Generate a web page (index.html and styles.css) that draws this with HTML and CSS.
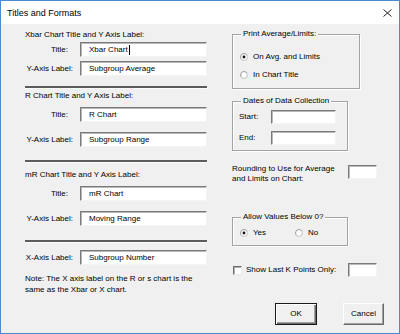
FILE: index.html
```html
<!DOCTYPE html>
<html lang="en">
<head>
    <meta charset="UTF-8">
    <title>Titles and Formats</title>
    <link rel="stylesheet" href="styles.css">
</head>
<body>
<div class="dialog">
    <div class="titlebar">
        <span class="title">Titles and Formats</span>
        <svg class="close" viewBox="0 0 9 8" width="9" height="8">
            <path d="M0.5 0.5 L8.5 7.5 M8.5 0.5 L0.5 7.5" stroke="#222" stroke-width="1" fill="none"/>
        </svg>
    </div>

    <div class="content">
        <div class="col-left">
            <div class="group group-xbar">
                <div class="heading">Xbar Chart Title and Y Axis Label:</div>
                <div class="field field-first">
                    <label class="lbl lbl-title">Title:</label>
                    <div class="textbox">Xbar Chart<span class="caret"></span></div>
                </div>
                <div class="field field-second">
                    <label class="lbl">Y-Axis Label:</label>
                    <div class="textbox">Subgroup Average</div>
                </div>
            </div>

            <div class="sep sep-1"></div>

            <div class="group group-r">
                <div class="heading">R Chart Title and Y Axis Label:</div>
                <div class="field field-first">
                    <label class="lbl lbl-title">Title:</label>
                    <div class="textbox">R Chart</div>
                </div>
                <div class="field field-second">
                    <label class="lbl">Y-Axis Label:</label>
                    <div class="textbox">Subgroup Range</div>
                </div>
            </div>

            <div class="sep sep-2"></div>

            <div class="group group-mr">
                <div class="heading">mR Chart Title and Y Axis Label:</div>
                <div class="field field-first">
                    <label class="lbl lbl-title">Title:</label>
                    <div class="textbox">mR Chart</div>
                </div>
                <div class="field field-second">
                    <label class="lbl">Y-Axis Label:</label>
                    <div class="textbox">Moving Range</div>
                </div>
            </div>

            <div class="sep sep-3"></div>

            <div class="field field-x">
                <label class="lbl">X-Axis Label:</label>
                <div class="textbox">Subgroup Number</div>
            </div>

            <p class="note">Note: The X axis label on the R or s chart is the<br>same as the Xbar or X chart.</p>
        </div>

        <div class="col-right">
            <fieldset class="frame frame-print">
                <legend>Print Average/Limits:</legend>
                <div class="radio radio-first">
                    <svg class="radio-dot" viewBox="0 0 8 8" width="8" height="8">
                        <circle cx="4" cy="4" r="3.5" fill="#fff" stroke="#9a9a9a"/>
                        <path d="M1.2 6.2 A3.5 3.5 0 0 0 6.8 1.8" stroke="#e4e4e4" fill="none"/>
                        <circle cx="4" cy="4" r="1.4" fill="#111"/>
                    </svg>
                    <span>On Avg. and Limits</span>
                </div>
                <div class="radio radio-second">
                    <svg class="radio-dot" viewBox="0 0 8 8" width="8" height="8">
                        <circle cx="4" cy="4" r="3.5" fill="#fff" stroke="#9a9a9a"/>
                        <path d="M1.2 6.2 A3.5 3.5 0 0 0 6.8 1.8" stroke="#e4e4e4" fill="none"/>
                    </svg>
                    <span>In Chart Title</span>
                </div>
            </fieldset>

            <fieldset class="frame frame-dates">
                <legend>Dates of Data Collection</legend>
                <div class="date-row date-start">
                    <span class="date-lbl">Start:</span>
                    <div class="textbox textbox-date"></div>
                </div>
                <div class="date-row date-end">
                    <span class="date-lbl">End:</span>
                    <div class="textbox textbox-date"></div>
                </div>
            </fieldset>

            <div class="rounding">
                <span>Rounding to Use for Average<br>and Limits on Chart:</span>
                <div class="textbox textbox-small"></div>
            </div>

            <fieldset class="frame frame-below">
                <legend>Allow Values Below 0?</legend>
                <div class="radio-pair">
                    <div class="radio">
                        <svg class="radio-dot" viewBox="0 0 8 8" width="8" height="8">
                            <circle cx="4" cy="4" r="3.5" fill="#fff" stroke="#9a9a9a"/>
                            <path d="M1.2 6.2 A3.5 3.5 0 0 0 6.8 1.8" stroke="#e4e4e4" fill="none"/>
                            <circle cx="4" cy="4" r="1.4" fill="#111"/>
                        </svg>
                        <span>Yes</span>
                    </div>
                    <div class="radio">
                        <svg class="radio-dot" viewBox="0 0 8 8" width="8" height="8">
                            <circle cx="4" cy="4" r="3.5" fill="#fff" stroke="#9a9a9a"/>
                            <path d="M1.2 6.2 A3.5 3.5 0 0 0 6.8 1.8" stroke="#e4e4e4" fill="none"/>
                        </svg>
                        <span>No</span>
                    </div>
                </div>
            </fieldset>

            <div class="check-row">
                <span class="checkbox"></span>
                <span class="check-text">Show Last K Points Only:</span>
                <div class="textbox textbox-small"></div>
            </div>

            <div class="buttons">
                <button class="btn btn-default">OK</button>
                <button class="btn">Cancel</button>
            </div>
        </div>
    </div>
</div>
</body>
</html>
```

FILE: styles.css
```css
* {
    box-sizing: border-box;
}
body {
    margin: 0;
    font-family: "Liberation Sans", Arial, sans-serif;
    font-size: 8px;
    line-height: 10px;
    color: #000;
}
.dialog {
    width: 400px;
    height: 334px;
    border: 1px solid #4b8bd1;
    background: #f0f0f0;
    display: flex;
    flex-direction: column;
}
.titlebar {
    height: 23px;
    flex: none;
    background: #fff;
    display: flex;
    align-items: center;
    justify-content: space-between;
    padding: 0 7px 0 6px;
}
.title {
    font-size: 9px;
    line-height: 12px;
}
.close {
    display: block;
}
.content {
    display: flex;
    gap: 25px;
    padding-left: 24px;
}

/* left column */
.col-left {
    width: 182px;
    display: flex;
    flex-direction: column;
}
.heading {
    white-space: nowrap;
}
.group-xbar { margin-top: 6px; }
.group-r { margin-top: 2px; }
.group-mr { margin-top: 7px; }
.field {
    display: flex;
    align-items: center;
    height: 15px;
}
.field-first { margin-top: 6px; }
.field-second { margin-top: 10px; }
.group-xbar .field-first { margin-top: 2px; }
.group-xbar .field-second { margin-top: 4px; }
.lbl {
    width: 55px;
    flex: none;
    text-align: right;
    padding-right: 7px;
    white-space: nowrap;
}
.lbl-title {
    padding-right: 12px;
}
.textbox {
    flex: 1;
    height: 100%;
    display: flex;
    align-items: center;
    padding-left: 8px;
    background: #fff;
    border: 1px solid;
    border-color: #7a7a7a #f4f4f4 #f4f4f4 #7a7a7a;
    box-shadow: inset 1px 1px #b9b9b9;
    white-space: nowrap;
}
.caret {
    width: 1px;
    height: 10px;
    background: #000;
    margin-left: 1px;
}
.sep {
    height: 3px;
    border-top: 2px solid #5b5b5b;
    border-bottom: 1px solid #fbfbfb;
}
.sep-1 { margin-top: 10px; }
.sep-2 { margin-top: 13px; }
.sep-3 { margin-top: 14px; }
.field-x { margin-top: 7px; }
.note {
    margin: 8px 0 0;
    line-height: 11px;
    white-space: nowrap;
}

/* right column */
.col-right {
    width: 152px;
    display: flex;
    flex-direction: column;
}
.frame {
    margin: 0;
    padding: 0;
    min-inline-size: 0;
    border: 1px solid #a3a3a3;
    box-shadow: inset 1px 1px #fff, 1px 1px #fff;
}
.frame legend {
    margin-left: 8px;
    padding: 0 2px;
    background: #f0f0f0;
    white-space: nowrap;
}
.frame-print {
    width: 128px;
    margin-top: 5px;
    padding-bottom: 8px;
}
.radio {
    display: flex;
    align-items: center;
    height: 10px;
    gap: 5px;
    white-space: nowrap;
}
.radio-dot {
    display: block;
    flex: none;
}
.frame-print .radio {
    padding-left: 7px;
}
.radio-first { margin-top: 13px; }
.radio-second { margin-top: 8px; }
.frame-dates {
    width: 116px;
    margin-top: 7px;
    padding-bottom: 5px;
}
.date-row {
    display: flex;
    align-items: center;
    height: 14px;
    padding-left: 6px;
}
.date-start { margin-top: 4px; }
.date-end { margin-top: 7px; }
.date-lbl {
    width: 32px;
    flex: none;
}
.textbox-date {
    flex: none;
    width: 65px;
}
.rounding {
    display: flex;
    justify-content: space-between;
    align-items: flex-start;
    margin-top: 13px;
    padding-right: 7px;
    white-space: nowrap;
}
.textbox-small {
    flex: none;
    width: 29px;
    height: 14px;
}
.rounding .textbox-small {
    margin-top: 1px;
}
.frame-below {
    width: 116px;
    margin-top: 28px;
    padding-bottom: 7px;
}
.radio-pair {
    display: grid;
    grid-template-columns: 55px auto;
    margin-top: 6px;
    padding-left: 7px;
}
.check-row {
    display: flex;
    align-items: center;
    height: 14px;
    margin-top: 17px;
    padding-left: 1px;
    padding-right: 7px;
}
.checkbox {
    width: 9px;
    height: 9px;
    flex: none;
    background: #fff;
    border: 1px solid;
    border-color: #6e6e6e #e8e8e8 #e8e8e8 #6e6e6e;
    box-shadow: inset 1px 1px #b0b0b0;
}
.check-text {
    flex: 1;
    padding-left: 4px;
    white-space: nowrap;
}
.buttons {
    display: flex;
    justify-content: flex-end;
    gap: 26px;
    margin-top: 26px;
}
.btn {
    width: 41px;
    height: 22px;
    padding: 0;
    font: inherit;
    color: #000;
    background: #f0f0f0;
    border: 1px solid;
    border-color: #fff #6a6a6a #6a6a6a #fff;
    box-shadow: inset -1px -1px #a0a0a0;
}
.btn-default {
    width: 42px;
    border: 1px solid #1a1a1a;
    box-shadow: inset 1px 1px #fff, inset -1px -1px #6a6a6a, inset -2px -2px #a0a0a0;
}
```
